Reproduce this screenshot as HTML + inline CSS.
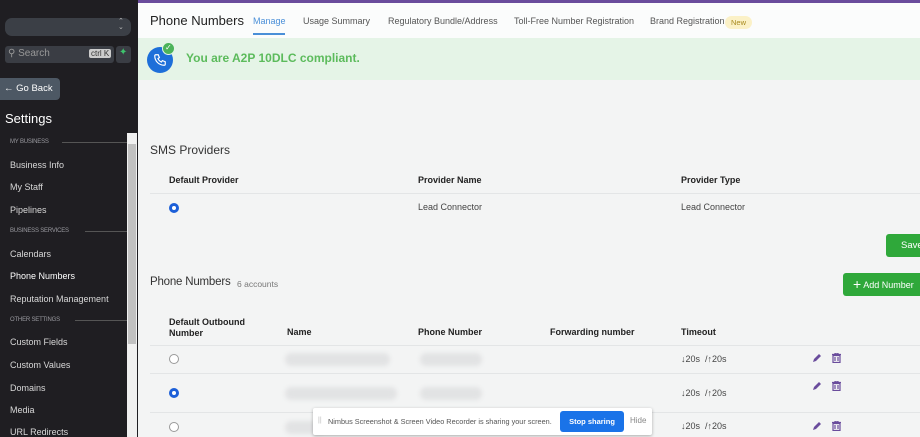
<!DOCTYPE html>
<html><head><meta charset="utf-8"><style>
*{margin:0;padding:0;box-sizing:border-box}
body{width:920px;height:437px;overflow:hidden;position:relative;background:#f3f4f4;font-family:"Liberation Sans",Arial,sans-serif;color:#222}
.a{position:absolute;white-space:nowrap}
#sb{position:absolute;left:0;top:0;width:138px;height:437px;background:#1f1e22}
.si{position:absolute;left:10px;font-size:9px;color:#d8d8d8}
.sl{position:absolute;left:10px;font-size:6px;color:#9a9aa0;letter-spacing:-.2px}
.ln{position:absolute;height:1px;background:#555}
.th{font-size:9px;font-weight:bold;color:#222}
.td{font-size:9px;color:#444}
.hl{position:absolute;height:1px;background:#e3e5e6}
.rad{position:absolute;width:10px;height:10px;border-radius:50%;border:1px solid #999;background:#fff}
.rad.on{border:3px solid #1c5fd8}
.blur{position:absolute;height:13px;border-radius:7px;background:#e2e3e4;filter:blur(2px)}
.tab{position:absolute;top:16px;font-size:9px;color:#555}
</style></head><body>
<div style="position:absolute;left:138px;top:0;width:782px;height:3px;background:#6a4c9c"></div>
<div style="position:absolute;left:138px;top:3px;width:782px;height:35px;background:#fbfcfc"></div>
<div style="position:absolute;left:138px;top:38px;width:782px;height:42px;background:#e5f4e7"></div>

<div id="sb">
 <div style="position:absolute;left:5px;top:18px;width:126px;height:18px;border-radius:7px;background:#3b3f46"></div>
 <div class="a" style="left:118px;top:19px;color:#bbb;font-size:7px;line-height:6px">⌃<br>⌄</div>
 <div style="position:absolute;left:5px;top:46px;width:109px;height:17px;border-radius:3px;background:#3a3d44"></div>
 <div class="a" style="left:8px;top:48px;font-size:10px;color:#999">⚲ Search</div>
 <div class="a" style="left:89px;top:49px;font-size:8px;background:#ccc;color:#333;padding:0 2px;border-radius:2px">ctrl K</div>
 <div style="position:absolute;left:116px;top:46px;width:15px;height:17px;border-radius:3px;background:#3a3d44"></div>
 <div class="a" style="left:119px;top:47px;font-size:10px;color:#3ec46d">✦</div>
 <div style="position:absolute;left:0;top:78px;width:60px;height:22px;border-radius:0 4px 4px 0;background:#4d5864"></div>
 <div class="a" style="left:4px;top:83px;font-size:9.5px;color:#fff"><b>←</b> Go Back</div>
 <div class="a" style="left:5px;top:111px;font-size:13px;color:#fff">Settings</div>
 <div style="position:absolute;left:127px;top:133px;width:10px;height:304px;background:#f0f0f0"></div>
 <div style="position:absolute;left:128px;top:144px;width:8px;height:200px;background:#c1c1c1"></div>
 <div class="sl" style="top:139px">MY BUSINESS</div><div class="ln" style="left:62px;top:142px;width:65px"></div>
 <div class="si" style="top:160px">Business Info</div>
 <div class="si" style="top:182px">My Staff</div>
 <div class="si" style="top:205px">Pipelines</div>
 <div class="sl" style="top:228px">BUSINESS SERVICES</div><div class="ln" style="left:85px;top:231px;width:42px"></div>
 <div class="si" style="top:249px">Calendars</div>
 <div class="si" style="top:271px;color:#fff">Phone Numbers</div>
 <div class="si" style="top:294px">Reputation Management</div>
 <div class="sl" style="top:317px">OTHER SETTINGS</div><div class="ln" style="left:75px;top:320px;width:52px"></div>
 <div class="si" style="top:337px">Custom Fields</div>
 <div class="si" style="top:360px">Custom Values</div>
 <div class="si" style="top:383px">Domains</div>
 <div class="si" style="top:405px">Media</div>
 <div class="si" style="top:427px">URL Redirects</div>
</div>

<div class="a" style="left:150px;top:13px;font-size:13px;color:#222">Phone Numbers</div>
<div class="tab" style="left:253px;color:#4a8fd8">Manage</div>
<div style="position:absolute;left:253px;top:33px;width:32px;height:2px;background:#4a8fd8"></div>
<div class="tab" style="left:303px">Usage Summary</div>
<div class="tab" style="left:388px">Regulatory Bundle/Address</div>
<div class="tab" style="left:514px">Toll-Free Number Registration</div>
<div class="tab" style="left:650px">Brand Registration</div>
<div class="a" style="left:725px;top:16px;width:27px;height:13px;border-radius:7px;background:#fbf1c7;color:#a88a20;font-size:7.5px;text-align:center;line-height:13px">New</div>

<div style="position:absolute;left:147px;top:47px;width:26px;height:26px;border-radius:50%;background:#1d6fd9"></div>
<svg class="a" style="left:153px;top:53px" width="14" height="14" viewBox="0 0 24 24"><path d="M5 3h4l2 5-2.5 1.5a11 11 0 0 0 6 6L16 13l5 2v4a2 2 0 0 1-2 2A16 16 0 0 1 3 5a2 2 0 0 1 2-2z" fill="none" stroke="#fff" stroke-width="2"/></svg>
<div style="position:absolute;left:162px;top:42px;width:13px;height:13px;border-radius:50%;background:#4cb35a;border:1px solid #e5f4e7"></div>
<div class="a" style="left:165px;top:43px;font-size:8px;color:#fff">✓</div>
<div class="a" style="left:186px;top:51px;font-size:12px;font-weight:bold;color:#5cbb5c">You are A2P 10DLC compliant.</div>

<div class="a" style="left:150px;top:143px;font-size:12px;color:#333">SMS Providers</div>
<div class="a th" style="left:169px;top:175px">Default Provider</div>
<div class="a th" style="left:418px;top:175px">Provider Name</div>
<div class="a th" style="left:681px;top:175px">Provider Type</div>
<div class="hl" style="left:150px;top:193px;width:770px"></div>
<div class="rad on" style="left:169px;top:203px"></div>
<div class="a td" style="left:418px;top:202px">Lead Connector</div>
<div class="a td" style="left:681px;top:202px">Lead Connector</div>
<div style="position:absolute;left:886px;top:234px;width:40px;height:23px;border-radius:3px;background:#2fa83a;color:#fff;font-size:9.5px;line-height:23px;padding-left:15px">Save</div>

<div class="a" style="left:150px;top:276px;font-size:11.5px;color:#333;letter-spacing:-0.2px">Phone Numbers</div>
<div class="a" style="left:237px;top:279px;font-size:8.5px;color:#777">6 accounts</div>
<div style="position:absolute;left:843px;top:273px;width:82px;height:23px;border-radius:3px;background:#2fa83a;color:#fff;font-size:9px;line-height:23px;padding-left:10px"><span style="font-size:14px;vertical-align:-1px">+</span> Add Number</div>

<div class="a th" style="left:169px;top:317px;line-height:11px">Default Outbound<br>Number</div>
<div class="a th" style="left:287px;top:327px">Name</div>
<div class="a th" style="left:418px;top:327px">Phone Number</div>
<div class="a th" style="left:550px;top:327px">Forwarding number</div>
<div class="a th" style="left:681px;top:327px">Timeout</div>
<div class="hl" style="left:150px;top:345px;width:770px"></div>
<div class="hl" style="left:150px;top:373px;width:770px"></div>
<div class="hl" style="left:150px;top:412px;width:770px"></div>

<div class="rad" style="left:169px;top:354px"></div>
<div class="rad on" style="left:169px;top:388px"></div>
<div class="rad" style="left:169px;top:422px"></div>
<div class="blur" style="left:285px;top:353px;width:105px"></div>
<div class="blur" style="left:420px;top:353px;width:62px"></div>
<div class="blur" style="left:285px;top:387px;width:112px"></div>
<div class="blur" style="left:420px;top:387px;width:62px"></div>
<div class="blur" style="left:285px;top:421px;width:40px"></div>
<div class="a td" style="left:681px;top:354px"><b>↓</b>20s &nbsp;/<b>↑</b>20s</div>
<div class="a td" style="left:681px;top:388px"><b>↓</b>20s &nbsp;/<b>↑</b>20s</div>
<div class="a td" style="left:681px;top:421px"><b>↓</b>20s &nbsp;/<b>↑</b>20s</div>

<svg class="a" style="left:812px;top:353px" width="10" height="10" viewBox="0 0 10 10"><path d="M1 9l1-3 5-5 2 2-5 5z" fill="#6a4c9c"/></svg>
<svg class="a" style="left:832px;top:353px" width="9" height="10" viewBox="0 0 9 10"><path d="M0 1.5h9M3 1V0h3v1M1 2.5h7v7H1z M3 4v4M6 4v4" fill="none" stroke="#6a4c9c" stroke-width="1.2"/></svg>
<svg class="a" style="left:812px;top:381px" width="10" height="10" viewBox="0 0 10 10"><path d="M1 9l1-3 5-5 2 2-5 5z" fill="#6a4c9c"/></svg>
<svg class="a" style="left:832px;top:381px" width="9" height="10" viewBox="0 0 9 10"><path d="M0 1.5h9M3 1V0h3v1M1 2.5h7v7H1z M3 4v4M6 4v4" fill="none" stroke="#6a4c9c" stroke-width="1.2"/></svg>
<svg class="a" style="left:812px;top:421px" width="10" height="10" viewBox="0 0 10 10"><path d="M1 9l1-3 5-5 2 2-5 5z" fill="#6a4c9c"/></svg>
<svg class="a" style="left:832px;top:421px" width="9" height="10" viewBox="0 0 9 10"><path d="M0 1.5h9M3 1V0h3v1M1 2.5h7v7H1z M3 4v4M6 4v4" fill="none" stroke="#6a4c9c" stroke-width="1.2"/></svg>

<div style="position:absolute;left:313px;top:408px;width:339px;height:27px;background:#fff;box-shadow:0 1px 3px rgba(0,0,0,.3);border-radius:2px"></div>
<div class="a" style="left:318px;top:417px;font-size:7px;color:#bbb">||</div>
<div class="a" style="left:328px;top:417px;font-size:7.3px;color:#555">Nimbus Screenshot &amp; Screen Video Recorder is sharing your screen.</div>
<div style="position:absolute;left:560px;top:411px;width:64px;height:21px;border-radius:3px;background:#1a73e8;color:#fff;font-size:7.5px;line-height:21px;text-align:center;font-weight:bold">Stop sharing</div>
<div class="a" style="left:630px;top:416px;font-size:8px;color:#888">Hide</div>
</body></html>
